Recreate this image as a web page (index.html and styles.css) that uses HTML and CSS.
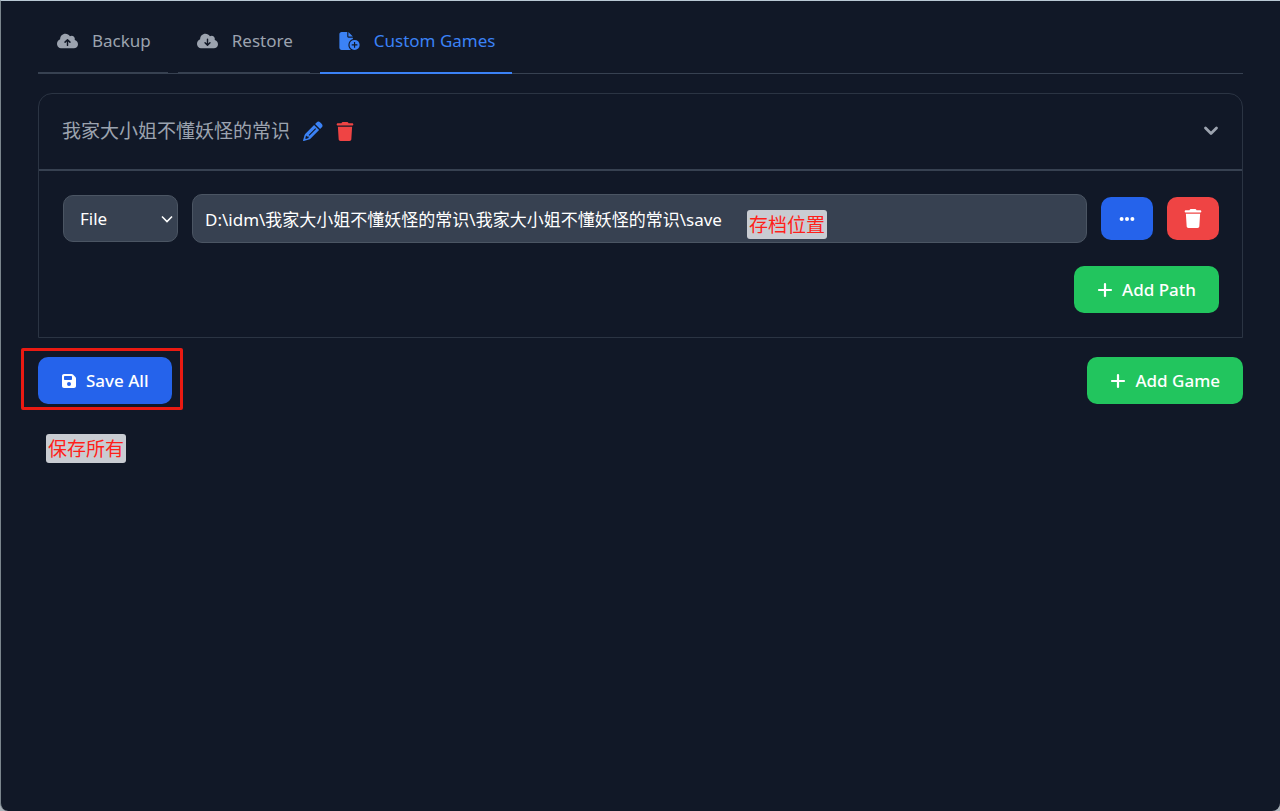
FILE: index.html
```html
<!DOCTYPE html>
<html lang="en">
<head>
<meta charset="utf-8">
<title>Custom Games</title>
<link rel="stylesheet" href="styles.css">
</head>
<body>
<svg class="defs" aria-hidden="true">
  <symbol id="cloud" viewBox="0 0 640 512"><path d="M144 480C64.500 480 0 415.500 0 336c0-62.800 40.200-116.200 96.200-135.900c-.1-2.700-.2-5.400-.2-8.100c0-88.400 71.600-160 160-160c59.300 0 111 32.200 138.700 80.200C409.900 102 428.300 96 448 96c53 0 96 43 96 96c0 12.200-2.300 23.800-6.400 34.600C596 238.400 640 290.100 640 352c0 70.700-57.300 128-128 128H144z"/></symbol>
  <symbol id="trash" viewBox="0 0 448 512"><path d="M135.200 17.700L128 32H32C14.300 32 0 46.300 0 64S14.300 96 32 96H416c17.700 0 32-14.300 32-32s-14.300-32-32-32H320l-7.200-14.300C307.400 6.800 296.300 0 284.200 0H163.800c-12.100 0-23.200 6.800-28.600 17.700zM416 128H32L53.200 467c1.600 25.300 22.600 45 47.900 45H346.900c25.300 0 46.300-19.700 47.900-45L416 128z"/></symbol>
  <symbol id="plus" viewBox="0 0 16 16"><path d="M8 2v12M2 8h12" fill="none" stroke="currentColor" stroke-width="2.2" stroke-linecap="round"/></symbol>
</svg>
<div class="window">
  <nav class="tabs">
    <button class="tab" type="button">
      <svg class="cloud-icon" viewBox="0 0 640 512"><use href="#cloud"/><path class="arrow" d="M320 390V220M245 290l75-75 75 75"/></svg>
      Backup
    </button>
    <button class="tab" type="button">
      <svg class="cloud-icon" viewBox="0 0 640 512"><use href="#cloud"/><path class="arrow" d="M320 205V380M245 310l75 75 75-75"/></svg>
      Restore
    </button>
    <button class="tab active" type="button">
      <svg class="cloud-icon" viewBox="0 0 576 512"><path d="M0 64C0 28.700 28.700 0 64 0H224V128c0 17.700 14.300 32 32 32H384v38.600C310.100 219.500 256 287.400 256 368c0 59.100 29.100 111.300 73.700 143.300c-3.200.5-6.400.7-9.700.7H64c-35.300 0-64-28.700-64-64V64zM384 128H256V0L384 128z"/><path fill-rule="evenodd" d="M432 224a144 144 0 1 1 0 288a144 144 0 1 1 0-288zM415 287v64h-64v34h64v64h34v-64h64v-34h-64v-64z"/></svg>
      Custom Games
    </button>
  </nav>

  <main>
    <section class="card">
      <header class="card-head">
        <h2 class="game-name">我家大小姐不懂妖怪的常识</h2>
        <button class="icon-button edit" type="button" aria-label="Rename game">
          <svg class="icon-20" viewBox="0 0 20 20"><path fill-rule="evenodd" d="M13.600 1.500a2.600 2.600 0 0 1 3.700 0l1.300 1.300a2.600 2.600 0 0 1 0 3.700l-1.500 1.500-5-5zM11.100 4l5 5-8.700 8.700c-.4.400-.9.700-1.500.8L.8 19.900c-.5.100-.8-.2-.7-.7l1.500-5.100c.2-.5.400-1 .8-1.400zM12.300 7.200L5.600 13.900l.8.8 6.700-6.700zM3.100 14.600l-.8 2.800.6.500 2.700-.8v-1.700H4.100z"/></svg>
        </button>
        <button class="icon-button remove" type="button" aria-label="Delete game">
          <svg class="icon-18"><use href="#trash"/></svg>
        </button>
        <button class="icon-button toggle" type="button" aria-label="Collapse">
          <svg class="icon-16" viewBox="0 0 16 16"><path d="M2.500 5L8 10.500 13.500 5" fill="none" stroke="currentColor" stroke-width="2.800" stroke-linecap="round" stroke-linejoin="round"/></svg>
        </button>
      </header>
      <div class="card-body">
        <div class="path-row">
          <div class="select-wrap">
            <select class="field" aria-label="Path type"><option>File</option><option>Folder</option></select>
            <svg class="caret" viewBox="0 0 12 12"><path d="M1 3.500l5 5 5-5" fill="none" stroke="currentColor" stroke-width="1.600"/></svg>
          </div>
          <div class="path-wrap">
            <input class="field path" type="text" aria-label="Save path" value="D:\idm\我家大小姐不懂妖怪的常识\我家大小姐不懂妖怪的常识\save">
            <span class="note note-path">存档位置</span>
          </div>
          <button class="square blue" type="button" aria-label="Browse">
            <svg class="icon-16" viewBox="0 0 16 16"><circle cx="2.600" cy="8" r="2"/><circle cx="8" cy="8" r="2"/><circle cx="13.400" cy="8" r="2"/></svg>
          </button>
          <button class="square red" type="button" aria-label="Delete path">
            <svg class="icon-18"><use href="#trash"/></svg>
          </button>
        </div>
        <button class="button green" type="button"><svg class="icon-16"><use href="#plus"/></svg>Add Path</button>
      </div>
    </section>

    <div class="actions">
      <div class="save-wrap">
        <button class="button blue" type="button"><svg class="icon-16" viewBox="0 0 448 512"><path d="M64 32C28.700 32 0 60.700 0 96V416c0 35.300 28.700 64 64 64H384c35.300 0 64-28.700 64-64V173.300c0-17-6.700-33.300-18.700-45.300L352 50.700C340 38.700 323.700 32 306.700 32H64zm0 96c0-17.700 14.300-32 32-32H288c17.700 0 32 14.300 32 32v64c0 17.700-14.300 32-32 32H96c-17.700 0-32-14.300-32-32V128zM224 288a64 64 0 1 1 0 128 64 64 0 1 1 0-128z"/></svg>Save All</button>
        <span class="highlight"></span>
        <span class="note note-save">保存所有</span>
      </div>
      <button class="button green" type="button"><svg class="icon-16"><use href="#plus"/></svg>Add Game</button>
    </div>
  </main>
</div>
</body>
</html>
```
FILE: styles.css
```css
* { box-sizing: border-box; }
body {
  margin: 0;
  background: #a9b1b8;
  font-family: "Noto Sans", "Noto Sans CJK SC", sans-serif;
  font-size: 17px;
  line-height: 24px;
}
button, input, select { font: inherit; }
button { border: 0; cursor: pointer; }
svg { display: block; flex: none; fill: currentColor; }
.defs { position: absolute; width: 0; height: 0; }

.window {
  min-height: 100vh;
  padding: 8px 37px 24px;
  background: #111827;
  border-top: 1px solid #b9c8d4;
  border-left: 1px solid #7b858d;
  border-radius: 0 0 8px 8px;
}

.tabs {
  display: flex;
  gap: 10px;
  margin-bottom: 19px;
  box-shadow: inset 0 -1px #374151;
}
.tab {
  display: flex;
  align-items: center;
  gap: 14px;
  padding: 20px 17px 19px 19px;
  background: none;
  color: #9ca3af;
  border-bottom: 2px solid #374151;
}
.tab.active { color: #3b82f6; border-color: #3b82f6; }
.cloud-icon { width: 21px; height: 18px; }
.arrow { fill: none; stroke: #111827; stroke-width: 44; stroke-linecap: round; stroke-linejoin: round; }

.card { border: 1px solid #2b3443; border-radius: 14px 14px 0 0; }
.card-head {
  display: flex;
  align-items: center;
  gap: 13px;
  padding: 23px 23px 24px;
  border-bottom: 2px solid #374151;
}
.game-name {
  margin: 0;
  font-size: 19px;
  font-weight: 400;
  line-height: 28px;
  color: #9ca3af;
}
.icon-button { padding: 0; background: none; }
.edit { color: #3b82f6; }
.remove { color: #ef4444; }
.toggle { margin-left: auto; color: #9ca3af; }
.icon-16 { width: 16px; height: 16px; }
.icon-18 { width: 18px; height: 19px; }
.icon-20 { width: 20px; height: 20px; }

.card-body {
  display: flex;
  flex-direction: column;
  align-items: flex-end;
  gap: 23px;
  padding: 23px 23px 24px 24px;
}
.path-row { display: flex; align-items: center; gap: 14px; width: 100%; }
.select-wrap, .path-wrap, .save-wrap { position: relative; }
.path-wrap { flex: 1; }
.field {
  display: block;
  width: 100%;
  padding: 0 12px;
  color: #fff;
  background: #374151;
  border: 1px solid #4b5563;
  border-radius: 10px;
}
select.field {
  appearance: none;
  width: 115px;
  height: 47px;
  padding-left: 16px;
}
.path { height: 49px; }
.caret {
  position: absolute;
  top: 18px;
  right: 5px;
  width: 12px;
  height: 12px;
  color: #fff;
  pointer-events: none;
}
.square {
  display: grid;
  place-items: center;
  width: 52px;
  height: 43px;
  padding: 0;
  color: #fff;
  border-radius: 10px;
}
.blue { background: #2563eb; }
.red { background: #ef4444; }
.green { background: #22c55e; }
.button {
  display: flex;
  align-items: center;
  gap: 9px;
  height: 47px;
  padding: 0 23px;
  color: #fff;
  font-weight: 500;
  border-radius: 10px;
}

.actions { display: flex; justify-content: space-between; margin-top: 19px; }

.highlight {
  position: absolute;
  inset: -9px -11px -6px -17px;
  border: 3px solid #ea1a12;
  border-radius: 2px;
  pointer-events: none;
}
.note {
  position: absolute;
  padding: 1px 2px 0;
  font-size: 19px;
  line-height: 28px;
  white-space: nowrap;
  color: #ff1f1a;
  background: #c9ccd2;
  border-radius: 3px;
}
.note-path { top: 16px; left: 555px; }
.note-save { top: 77px; left: 8px; }
```
